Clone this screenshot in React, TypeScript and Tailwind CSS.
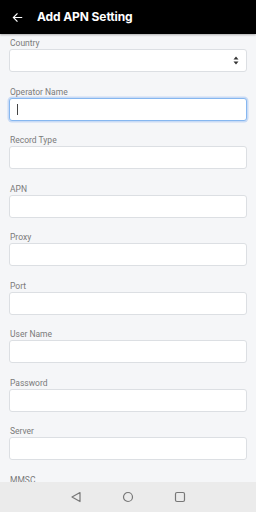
import React from 'react';

const FIELDS = [
  'Country',
  'Operator Name',
  'Record Type',
  'APN',
  'Proxy',
  'Port',
  'User Name',
  'Password',
  'Server',
  'MMSC',
];

const App: React.FC = () => {
  return (
    <div
      className="relative w-[256px] h-[512px] overflow-hidden bg-[#f5f6f8]"
      style={{ fontFamily: 'Roboto, "Liberation Sans", sans-serif' }}
    >
      <header className="h-[34px] bg-black flex items-center shadow-[0_1px_2px_rgba(0,0,0,0.3)]">
        <svg width="11" height="11" viewBox="0 0 24 24" className="ml-[12px]" fill="none" stroke="white" strokeWidth="2.6" strokeLinecap="square">
          <path d="M21 12H4M11 4l-8 8 8 8" />
        </svg>
        <h1 className="ml-[14px] text-white font-bold text-[12px] tracking-[-0.1px]" style={{ fontFamily: 'Inter, Roboto, sans-serif' }}>
          Add APN Setting
        </h1>
      </header>

      <div className="pt-[3px] px-[9px]">
        {FIELDS.map((label, i) => (
          <div key={label} className="mb-[13.5px]">
            <div className="h-[12px] leading-[12px] text-[8.5px] text-[#7a7a7a] pl-px">{label}</div>
            {i === 0 ? (
              <div className="h-[23px] bg-white border border-[#dcdfe3] rounded-[3px] flex items-center justify-end pr-[7px]">
                <svg width="6" height="9" viewBox="0 0 6 9" fill="#333">
                  <path d="M3 0.5L5.5 3.5H0.5Z M3 8.5L5.5 5.5H0.5Z" />
                </svg>
              </div>
            ) : i === 1 ? (
              <div className="h-[23px] bg-white border border-[#86b7f0] rounded-[3px] shadow-[0_0_0_1.5px_rgba(120,170,240,0.35)] flex items-center pl-[7px]">
                <div className="w-px h-[11px] bg-[#444]" />
              </div>
            ) : (
              <div className="h-[23px] bg-white border border-[#dcdfe3] rounded-[3px]" />
            )}
          </div>
        ))}
      </div>

      <nav className="absolute bottom-0 left-0 right-0 h-[30px] bg-[#ebebeb] flex items-center justify-center gap-[40px]">
        <svg width="12" height="12" viewBox="0 0 12 12" fill="none" stroke="#777" strokeWidth="1.2">
          <path d="M10 1.5L2 6l8 4.5z" strokeLinejoin="round" />
        </svg>
        <svg width="12" height="12" viewBox="0 0 12 12" fill="none" stroke="#777" strokeWidth="1.2">
          <circle cx="6" cy="6" r="4.5" />
        </svg>
        <svg width="12" height="12" viewBox="0 0 12 12" fill="none" stroke="#777" strokeWidth="1.2">
          <rect x="1.5" y="1.5" width="9" height="9" rx="1.5" />
        </svg>
      </nav>
    </div>
  );
};

export default App;
